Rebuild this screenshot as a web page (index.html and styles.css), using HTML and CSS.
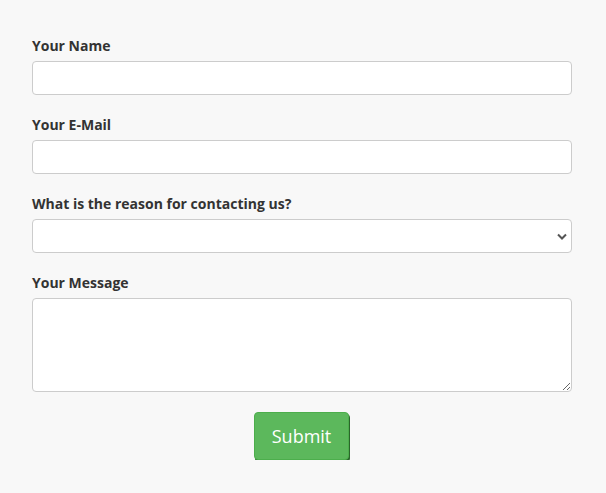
FILE: index.html
```html
<!DOCTYPE html>
<html>
<head>
<meta charset="utf-8">
<link rel="stylesheet" href="styles.css">
</head>
<body>
<form class="contact">
  <div class="group">
    <label class="label" for="name">Your Name</label>
    <input class="control" id="name" type="text">
  </div>
  <div class="group">
    <label class="label" for="email">Your E-Mail</label>
    <input class="control" id="email" type="email">
  </div>
  <div class="group">
    <label class="label" for="reason">What is the reason for contacting us?</label>
    <div class="select-wrap">
      <select class="control select" id="reason"><option></option></select>
      <svg class="chevron" width="10" height="7" viewBox="0 0 10 7"><path d="M1 1.5 L5 5.5 L9 1.5" fill="none" stroke="#555" stroke-width="2"/></svg>
    </div>
  </div>
  <div class="group">
    <label class="label" for="msg">Your Message</label>
    <textarea class="control area" id="msg"></textarea>
  </div>
  <div class="actions">
    <button class="submit" type="submit">Submit</button>
  </div>
</form>
</body>
</html>
```
FILE: styles.css
```css
html, body {
  margin: 0;
  padding: 0;
  background: #f8f8f8;
  font-family: "Open Sans", "Liberation Sans", sans-serif;
  color: #333;
}
.contact {
  width: 540px;
  padding: 36px 0 0 32px;
}
.group {
  display: flex;
  flex-direction: column;
  margin-bottom: 20px;
}
.label {
  font-size: 14px;
  font-weight: 700;
  line-height: 20px;
  margin-bottom: 5px;
  color: #333;
}
.control {
  box-sizing: border-box;
  width: 540px;
  height: 34px;
  margin: 0;
  border: 1px solid #ccc;
  border-radius: 4px;
  background: #fff;
  font-family: inherit;
  font-size: 14px;
  padding: 6px 12px;
}
.select-wrap {
  position: relative;
  height: 34px;
}
.select {
  appearance: none;
  -webkit-appearance: none;
  display: block;
}
.chevron {
  position: absolute;
  right: 5px;
  top: 14px;
  pointer-events: none;
}
.area {
  height: 94px;
  resize: vertical;
  display: block;
}
.actions {
  display: flex;
  justify-content: center;
}
.submit {
  width: 95px;
  height: 48px;
  background: #5cb85c;
  border: 1px solid #4cae4c;
  border-radius: 4px;
  box-shadow: 1px 2px 0 #2a662a;
  color: #fff;
  font-family: inherit;
  font-size: 18px;
  padding: 0;
  margin-left: -1px;
}
```
